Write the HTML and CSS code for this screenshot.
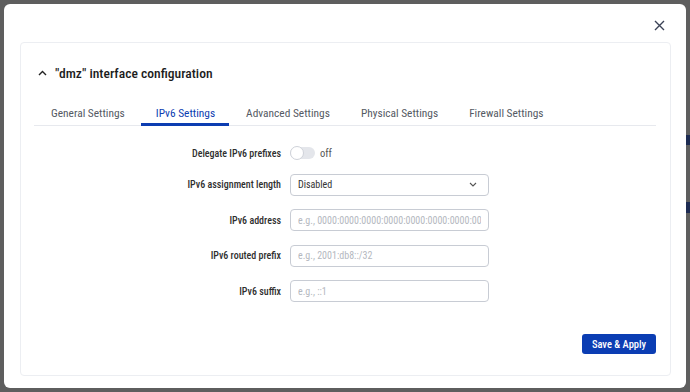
FILE: index.html
```html
<!DOCTYPE html>
<html lang="en">
  <head>
    <meta charset="UTF-8" />
    <meta name="viewport" content="width=device-width, initial-scale=1.0" />
    <title>Interface configuration</title>
    <link rel="stylesheet" href="styles.css">
  </head>
  <body>
    <!-- page behind the overlay -->
    <div class="page">
      <span class="page-chip chip-one"></span>
      <span class="page-chip chip-two"></span>
    </div>

    <div class="modal">
      <div class="modal-head">
        <button class="close-btn" aria-label="Close">
          <svg width="11" height="11" viewBox="0 0 11 11">
            <path d="M1 1 L10 10 M10 1 L1 10" stroke="#3b4256" stroke-width="1.4" fill="none" />
          </svg>
        </button>
      </div>

      <div class="card">
        <div class="card-title">
          <svg class="chevron" width="9" height="6" viewBox="0 0 9 6">
            <path d="M1 5 L4.5 1.5 L8 5" stroke="#222" stroke-width="1.4" fill="none" />
          </svg>
          <span>"dmz" interface configuration</span>
        </div>

        <div class="tabs">
          <div class="tab">General Settings</div>
          <div class="tab active">IPv6 Settings</div>
          <div class="tab">Advanced Settings</div>
          <div class="tab">Physical Settings</div>
          <div class="tab">Firewall Settings</div>
        </div>

        <div class="form">
          <label class="row-label">Delegate IPv6 prefixes</label>
          <div class="toggle-wrap">
            <span class="toggle"><span class="knob"></span></span>
            <span class="toggle-text">off</span>
          </div>

          <label class="row-label">IPv6 assignment length</label>
          <div class="select">
            <span>Disabled</span>
            <svg width="8" height="5" viewBox="0 0 8 5">
              <path d="M1 1 L4 4 L7 1" stroke="#555" stroke-width="1.1" fill="none" />
            </svg>
          </div>

          <label class="row-label">IPv6 address</label>
          <input class="field" type="text" placeholder="e.g., 0000:0000:0000:0000:0000:0000:0000:0000" />

          <label class="row-label">IPv6 routed prefix</label>
          <input class="field" type="text" placeholder="e.g., 2001:db8::/32" />

          <label class="row-label">IPv6 suffix</label>
          <input class="field" type="text" placeholder="e.g., ::1" />
        </div>

        <div class="actions">
          <button class="save-btn">Save &amp; Apply</button>
        </div>
      </div>
    </div>
  </body>
</html>
```

FILE: styles.css
```css
* {
  box-sizing: border-box;
}
body {
  margin: 0;
  width: 690px;
  height: 392px;
  overflow: hidden;
  background-color: #5e5e5e;
  font-family: Roboto, "Noto Sans", sans-serif;
  font-stretch: 80%;
  font-size: 11px;
  color: #333;
}
.page {
  position: absolute;
  left: 0;
  top: 0;
  width: 690px;
  height: 392px;
}
.page-chip {
  position: absolute;
  right: 0;
  width: 6px;
  background-color: #1d2b52;
}
.chip-one {
  top: 135px;
  height: 10px;
}
.chip-two {
  top: 202px;
  height: 11px;
}
.modal {
  position: absolute;
  left: 4px;
  top: 4px;
  width: 682px;
  height: 384px;
  background-color: #fff;
  border-radius: 6px;
  display: flex;
  flex-direction: column;
  padding: 0 15px 12px 16px;
}
.modal-head {
  height: 38px;
  display: flex;
  justify-content: flex-end;
  align-items: center;
  padding-right: 6px;
}
.close-btn {
  border: none;
  background: none;
  padding: 0;
  display: flex;
  margin-top: 4px;
}
.card {
  flex: 1;
  border: 1px solid #eceef2;
  border-radius: 4px;
  padding: 0 14px 21px 13px;
  display: flex;
  flex-direction: column;
}
.card-title {
  display: flex;
  align-items: center;
  gap: 8px;
  padding: 19px 0 0 4px;
  height: 40px;
  font-size: 13.6px;
  font-stretch: 87.5%;
  font-weight: 500;
  color: #1c1c1c;
}
.chevron {
  margin-top: 1px;
}
.tabs {
  display: flex;
  gap: 2px;
  margin-top: 16px;
  border-bottom: 1px solid #e7e9ee;
}
.tab {
  padding: 7px 14px 3px 15px;
  font-size: 11.4px;
  font-stretch: 85%;
  line-height: 14px;
  color: #555a63;
  border-bottom: 3px solid transparent;
  margin-bottom: -1px;
  white-space: nowrap;
}
.tab:first-child {
  padding-left: 17px;
}
.tab.active {
  color: #0c3db1;
  border-bottom-color: #0c3db1;
}
.form {
  display: grid;
  grid-template-columns: 247px 199px;
  column-gap: 9px;
  row-gap: 13.5px;
  align-items: center;
  margin-top: 20px;
}
.row-label {
  text-align: right;
  font-size: 10px;
  font-weight: 500;
  color: #2e2e2e;
}
.toggle-wrap {
  display: flex;
  align-items: center;
  gap: 5px;
  height: 14px;
}
.toggle {
  width: 25px;
  height: 12px;
  border-radius: 6px;
  background-color: #e4e6eb;
  position: relative;
}
.knob {
  position: absolute;
  left: 0;
  top: -1px;
  width: 14px;
  height: 14px;
  border-radius: 50%;
  background-color: #fff;
  border: 1px solid #cfd2d9;
}
.toggle-text {
  color: #555;
  font-size: 10.5px;
}
.select,
.field {
  height: 22px;
  width: 199px;
  border: 1px solid #c8ccd4;
  border-radius: 4px;
  background-color: #fff;
  font-family: inherit;
  font-stretch: 80%;
  font-size: 10px;
  padding: 0 7px;
}
.select {
  display: flex;
  align-items: center;
  justify-content: space-between;
  color: #333;
  padding-right: 11px;
}
.field {
  outline: none;
}
.field::placeholder {
  color: #b4b8c0;
}
.actions {
  margin-top: auto;
  display: flex;
  justify-content: flex-end;
}
.save-btn {
  background-color: #0b3db3;
  color: #fff;
  border: none;
  border-radius: 3px;
  font-family: inherit;
  font-stretch: 80%;
  font-size: 10.5px;
  font-weight: 500;
  height: 20px;
  width: 74px;
  padding: 0;
}
```
